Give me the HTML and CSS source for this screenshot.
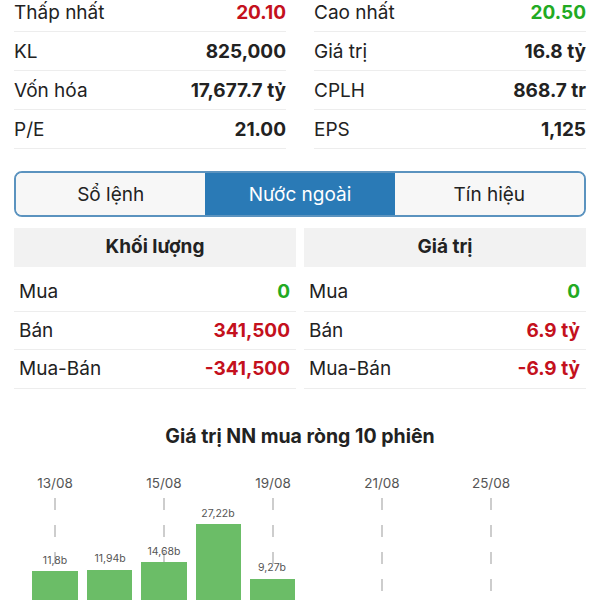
FILE: index.html
```html
<!DOCTYPE html>
<html lang="vi">
<head>
    <meta charset="UTF-8">
    <meta name="viewport" content="width=device-width, initial-scale=1.0">
    <title>Chi tiết cổ phiếu</title>
    <link rel="stylesheet" href="styles.css">
</head>
<body>
    <div class="stats">
        <div class="stat-col">
            <div class="stat-row"><span>Thấp nhất</span><strong class="down">20.10</strong></div>
            <div class="stat-row"><span>KL</span><strong>825,000</strong></div>
            <div class="stat-row"><span>Vốn hóa</span><strong>17,677.7 tỷ</strong></div>
            <div class="stat-row"><span>P/E</span><strong>21.00</strong></div>
        </div>
        <div class="stat-col">
            <div class="stat-row"><span>Cao nhất</span><strong class="up">20.50</strong></div>
            <div class="stat-row"><span>Giá trị</span><strong>16.8 tỷ</strong></div>
            <div class="stat-row"><span>CPLH</span><strong>868.7 tr</strong></div>
            <div class="stat-row"><span>EPS</span><strong>1,125</strong></div>
        </div>
    </div>

    <div class="tabs">
        <button class="tab">Sổ lệnh</button>
        <button class="tab active">Nước ngoài</button>
        <button class="tab">Tín hiệu</button>
    </div>

    <div class="foreign">
        <div class="foreign-col">
            <h2>Khối lượng</h2>
            <div class="f-row"><span>Mua</span><strong class="up">0</strong></div>
            <div class="f-row"><span>Bán</span><strong class="down">341,500</strong></div>
            <div class="f-row"><span>Mua-Bán</span><strong class="down">-341,500</strong></div>
        </div>
        <div class="foreign-col">
            <h2>Giá trị</h2>
            <div class="f-row"><span>Mua</span><strong class="up">0</strong></div>
            <div class="f-row"><span>Bán</span><strong class="down">6.9 tỷ</strong></div>
            <div class="f-row"><span>Mua-Bán</span><strong class="down">-6.9 tỷ</strong></div>
        </div>
    </div>

    <div class="chart">
        <h3>Giá trị NN mua ròng 10 phiên</h3>
        <svg class="chart-svg" width="600" height="135" viewBox="0 0 600 135">
            <g class="grid">
                <line x1="55" y1="33" x2="55" y2="135"></line>
                <line x1="164" y1="33" x2="164" y2="135"></line>
                <line x1="273" y1="33" x2="273" y2="135"></line>
                <line x1="382" y1="33" x2="382" y2="135"></line>
                <line x1="491" y1="33" x2="491" y2="135"></line>
            </g>
            <g class="dates">
                <text x="55" y="23">13/08</text>
                <text x="164" y="23">15/08</text>
                <text x="273" y="23">19/08</text>
                <text x="382" y="23">21/08</text>
                <text x="491" y="23">25/08</text>
            </g>
            <g class="bars">
                <rect x="32" y="106" width="46" height="40"></rect>
                <rect x="87" y="105" width="45" height="40"></rect>
                <rect x="141" y="97" width="46" height="50"></rect>
                <rect x="196" y="59" width="45" height="90"></rect>
                <rect x="250" y="114" width="45" height="30"></rect>
            </g>
            <g class="values">
                <text x="55" y="99">11,8b</text>
                <text x="110" y="97">11,94b</text>
                <text x="164" y="90">14,68b</text>
                <text x="218" y="52">27,22b</text>
                <text x="272" y="106">9,27b</text>
            </g>
        </svg>
    </div>
</body>
</html>
```

FILE: styles.css
```css
body {
    margin: 0;
    padding: 0 14px;
    font-family: Inter, "Noto Sans", sans-serif;
    color: #222;
    background: #fff;
    overflow: hidden;
}

.up {
    color: #22aa22;
}

.down {
    color: #c4111d;
}

.stats {
    display: grid;
    grid-template-columns: 1fr 1fr;
    column-gap: 28px;
    margin-top: -7px;
}

.stat-row {
    display: flex;
    justify-content: space-between;
    align-items: center;
    height: 38px;
    border-bottom: 1px solid #ededed;
    font-size: 19px;
}

.stat-row strong {
    font-weight: 700;
}

.tabs {
    display: flex;
    margin-top: 22px;
    height: 46px;
    box-sizing: border-box;
    border: 2px solid #5b93bf;
    border-radius: 8px;
    overflow: hidden;
}

.tab {
    flex: 1;
    border: none;
    margin: 0;
    background: #f7f7f7;
    font-family: inherit;
    font-size: 19px;
    color: #222;
}

.tab.active {
    background: #2a7ab6;
    color: #fff;
}

.foreign {
    display: grid;
    grid-template-columns: 1fr 1fr;
    column-gap: 8px;
    margin-top: 11px;
}

.foreign-col h2 {
    margin: 0 0 6px;
    height: 39px;
    line-height: 37px;
    background: #f2f2f2;
    text-align: center;
    font-size: 19px;
    font-weight: 700;
}

.f-row {
    display: flex;
    justify-content: space-between;
    align-items: center;
    height: 37.5px;
    padding: 0 6px 0 5px;
    border-bottom: 1px solid #ededed;
    font-size: 19px;
}

.f-row strong {
    font-weight: 700;
}

.chart {
    margin: 0 -14px;
}

.chart h3 {
    margin: 36px 0 0;
    line-height: 22px;
    text-align: center;
    font-size: 19.5px;
    font-weight: 700;
}

.chart-svg {
    display: block;
    margin-top: 18px;
}

.grid line {
    stroke: #bdbdbd;
    stroke-width: 1.5;
    stroke-dasharray: 12 15;
}

.dates text {
    font-size: 13.5px;
    fill: #555;
    text-anchor: middle;
}

.bars rect {
    fill: #6bbd67;
}

.values text {
    font-size: 10.5px;
    fill: #555;
    text-anchor: middle;
}
```
